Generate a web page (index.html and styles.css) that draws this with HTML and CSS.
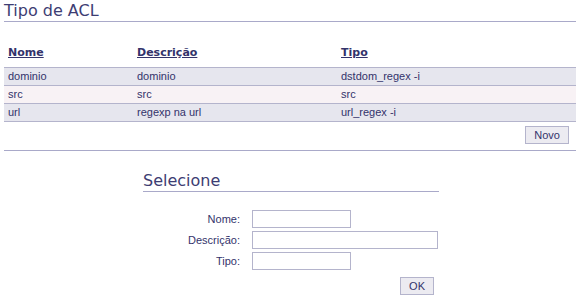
FILE: index.html
```html
<!DOCTYPE html>
<html lang="pt">
<head>
    <meta charset="UTF-8">
    <title>Tipo de ACL</title>
    <link rel="stylesheet" href="styles.css">
</head>
<body>
    <h1 class="title">Tipo de ACL</h1>

    <table class="list">
        <thead>
            <tr>
                <th class="col-name"><a href="#">Nome</a></th>
                <th class="col-desc"><a href="#">Descrição</a></th>
                <th class="col-type"><a href="#">Tipo</a></th>
            </tr>
        </thead>
        <tbody>
            <tr class="odd">
                <td>dominio</td>
                <td>dominio</td>
                <td>dstdom_regex -i</td>
            </tr>
            <tr class="even">
                <td>src</td>
                <td>src</td>
                <td>src</td>
            </tr>
            <tr class="odd">
                <td>url</td>
                <td>regexp na url</td>
                <td>url_regex -i</td>
            </tr>
        </tbody>
    </table>

    <div class="actions">
        <button class="btn">Novo</button>
    </div>
    <hr class="sep">

    <form class="search">
        <h2 class="subtitle">Selecione</h2>
        <div class="fields">
            <label for="f-nome">Nome:</label>
            <input id="f-nome" type="text" class="short">
            <label for="f-desc">Descrição:</label>
            <input id="f-desc" type="text" class="long">
            <label for="f-tipo">Tipo:</label>
            <input id="f-tipo" type="text" class="short">
        </div>
        <div class="submit">
            <button type="button" class="btn">OK</button>
        </div>
    </form>
</body>
</html>
```

FILE: styles.css
```css
body {
    margin: 0;
    padding: 0 4px;
    background-color: #fff;
    color: #33336b;
    font-family: "Liberation Sans", Arial, sans-serif;
    font-size: 11px;
}
.title {
    font-family: "DejaVu Sans", Verdana, sans-serif;
    font-weight: normal;
    font-size: 16px;
    color: #3d3d73;
    margin: 0;
    padding: 2px 0 1px 0;
    line-height: 18px;
    border-bottom: 1px solid #a9a9c9;
}
.list {
    width: 100%;
    border-collapse: collapse;
    margin-top: 22px;
}
.list th {
    text-align: left;
    font-family: "DejaVu Sans", Verdana, sans-serif;
    font-size: 11px;
    padding: 2px 4px 7px 4px;
    line-height: 14px;
}
.list th a {
    color: #33336b;
    text-decoration: underline;
}
.col-name { width: 121px; }
.col-desc { width: 196px; }
.list td {
    padding: 0 4px;
    height: 17px;
    line-height: 17px;
    border-top: 1px solid #b4b4cc;
    border-bottom: 1px solid #b4b4cc;
}
.list tr.odd td { background-color: #e6e6ee; }
.list tr.even td { background-color: #f8f2f5; }
.actions {
    display: flex;
    justify-content: flex-end;
    padding: 4px 7px 0 0;
}
.btn {
    font-family: "Liberation Sans", Arial, sans-serif;
    font-size: 11px;
    color: #33336b;
    background-color: #ecebf1;
    border: 1px solid #b4b4cc;
    border-radius: 0;
    padding: 2px 8px;
    line-height: 13px;
    height: 18px;
}
.sep {
    border: none;
    border-top: 1px solid #a9a9c9;
    margin: 6px 0 0 0;
}
.search {
    width: 296px;
    margin: 21px 0 0 139px;
}
.subtitle {
    font-family: "DejaVu Sans", Verdana, sans-serif;
    font-weight: normal;
    font-size: 16px;
    color: #3d3d73;
    margin: 0;
    line-height: 18px;
    padding-bottom: 1px;
    border-bottom: 1px solid #a9a9c9;
}
.fields {
    display: grid;
    grid-template-columns: 97px auto;
    column-gap: 12px;
    row-gap: 3px;
    align-items: center;
    justify-items: start;
    margin-top: 18px;
}
.fields label {
    justify-self: end;
}
.fields input {
    box-sizing: border-box;
    height: 18px;
    border: 1px solid #b4b4cc;
    padding: 0 2px;
    margin: 0;
    font-family: "Liberation Sans", Arial, sans-serif;
    font-size: 11px;
}
.fields input.short { width: 99px; }
.fields input.long { width: 186px; }
.submit {
    display: flex;
    justify-content: flex-end;
    padding: 7px 5px 0 0;
}
```
